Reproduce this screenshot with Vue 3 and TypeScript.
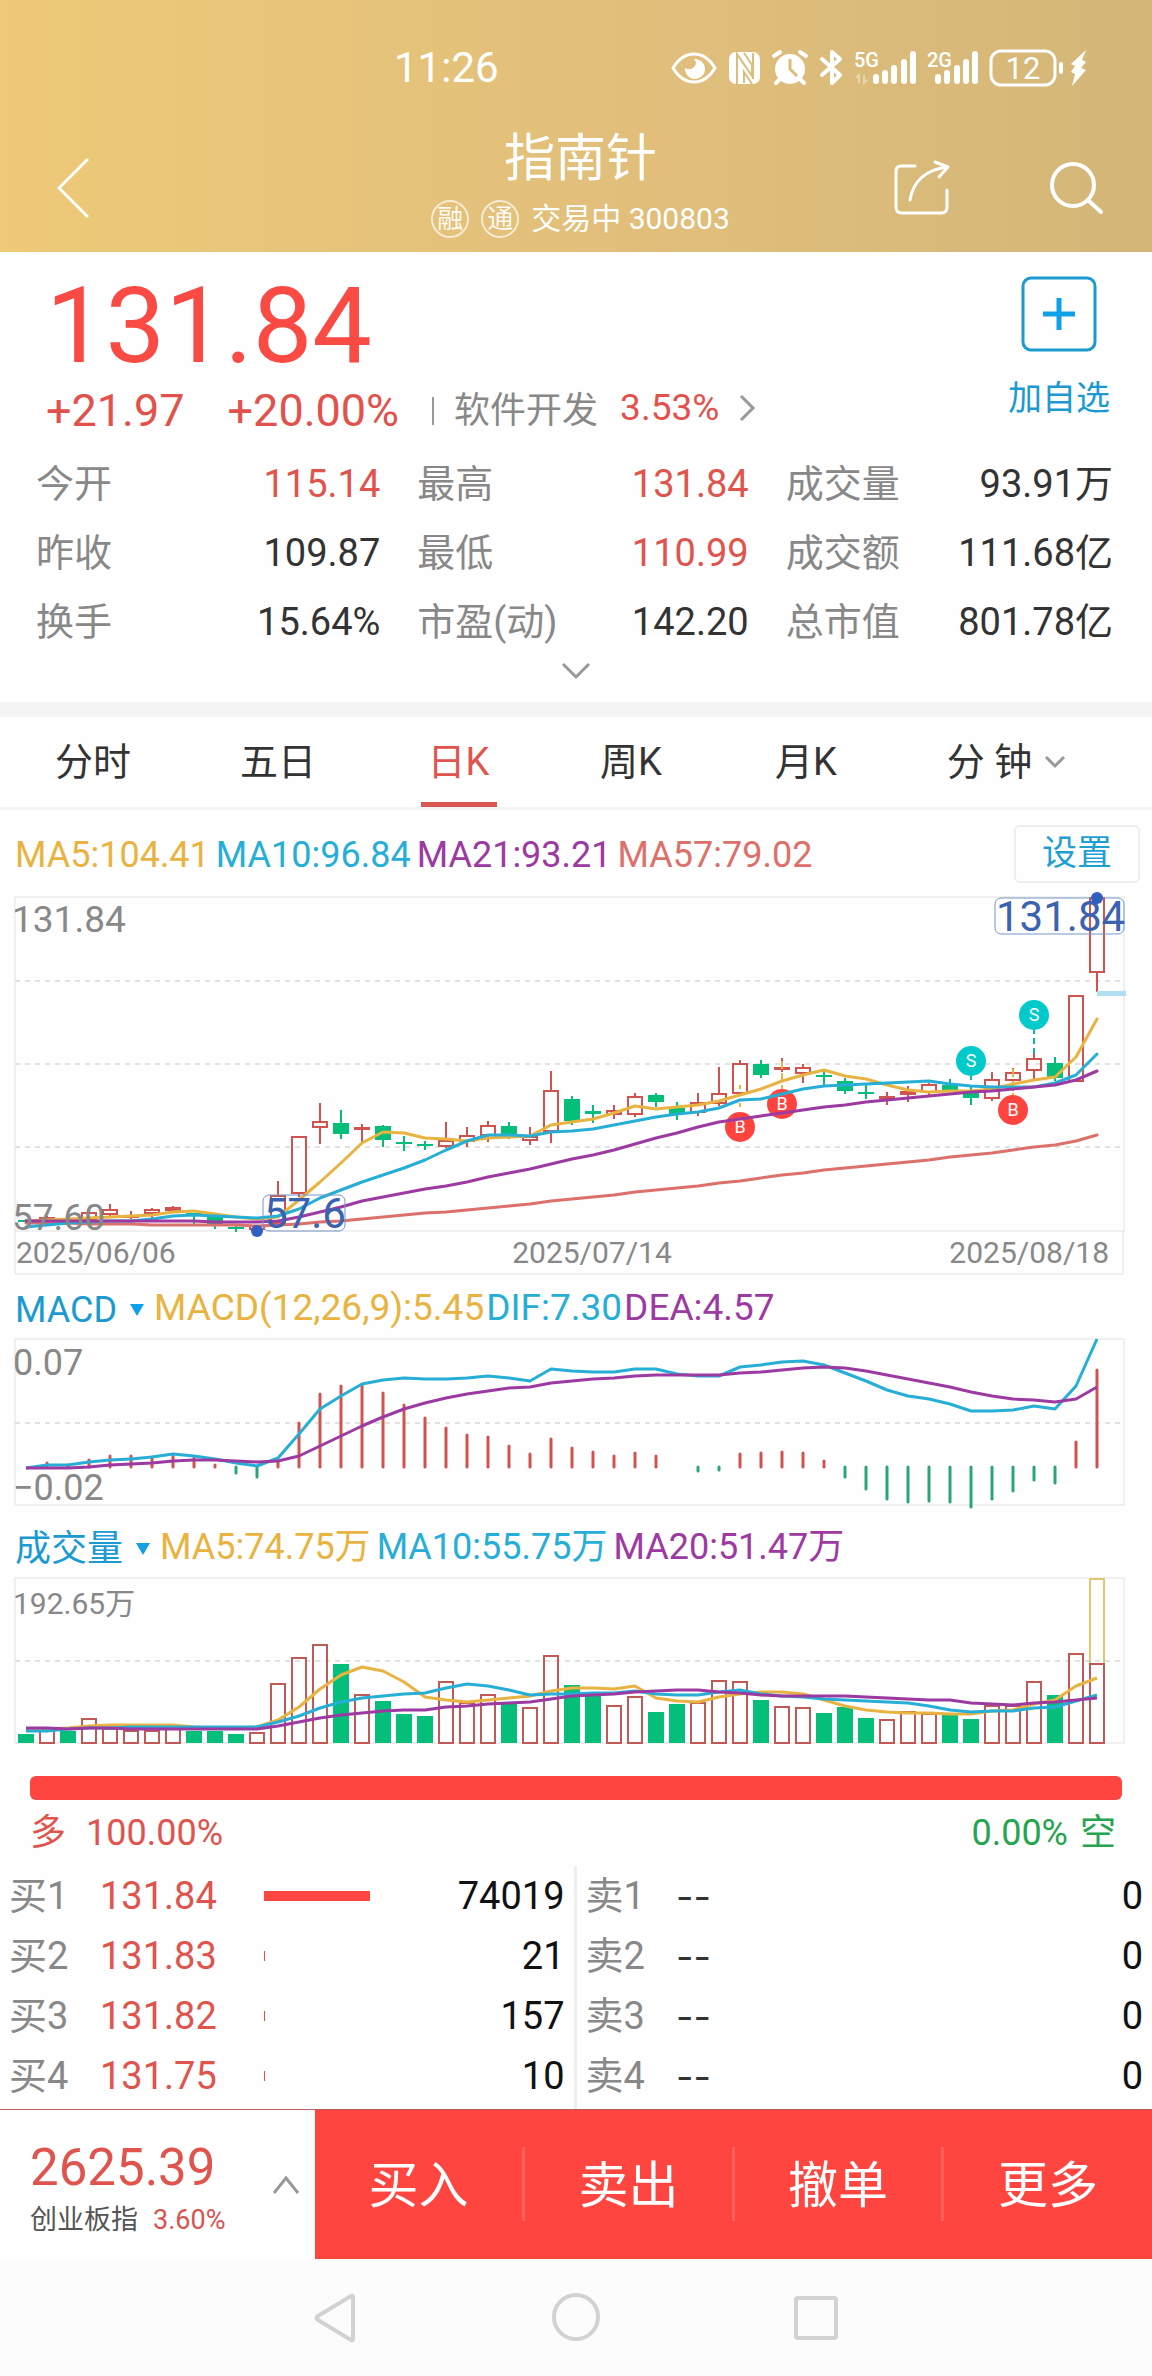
<script setup lang="ts">
type Tone = 'up' | 'down' | 'plain'
interface Stat { label: string; value: string; tone: Tone }
interface Legend { text: string; color: string }
/** [rising, body top, body bottom, wick top, wick bottom] */
type Candle = [number, number, number, number, number]

const YELLOW = '#e8b341'
const BLUE = '#27aed6'
const PURPLE = '#9c3aa2'
const SALMON = '#dc706b'
const RED = '#d0534f'
const GREEN = '#05be7a'

const stats: Stat[] = [
  { label: '今开', value: '115.14', tone: 'up' },
  { label: '最高', value: '131.84', tone: 'up' },
  { label: '成交量', value: '93.91万', tone: 'plain' },
  { label: '昨收', value: '109.87', tone: 'plain' },
  { label: '最低', value: '110.99', tone: 'up' },
  { label: '成交额', value: '111.68亿', tone: 'plain' },
  { label: '换手', value: '15.64%', tone: 'plain' },
  { label: '市盈(动)', value: '142.20', tone: 'plain' },
  { label: '总市值', value: '801.78亿', tone: 'plain' },
]

const tabs = ['分时', '五日', '日K', '周K', '月K', '分 钟']
const activeTab = '日K'

const maLegend: Legend[] = [
  { text: 'MA5:104.41', color: YELLOW },
  { text: 'MA10:96.84', color: BLUE },
  { text: 'MA21:93.21', color: PURPLE },
  { text: 'MA57:79.02', color: SALMON },
]
const macdLegend: Legend[] = [
  { text: 'MACD(12,26,9):5.45', color: YELLOW },
  { text: 'DIF:7.30', color: BLUE },
  { text: 'DEA:4.57', color: PURPLE },
]
const volLegend: Legend[] = [
  { text: 'MA5:74.75万', color: YELLOW },
  { text: 'MA10:55.75万', color: BLUE },
  { text: 'MA20:51.47万', color: PURPLE },
]

const px = (i: number): number => 26 + 21 * i
const line = (ys: number[]): string => ys.map((y, i) => `${px(i)},${y}`).join(' ')

const candles: Candle[] = [
  [0, 340, 342, 339, 344], [1, 338, 340, 336, 342], [0, 338, 340, 337, 342], [1, 333, 339, 331, 341],
  [1, 330, 334, 324, 336], [1, 336, 337, 331, 339], [1, 330, 333, 328, 338], [1, 328, 330, 326, 332],
  [0, 333, 336, 333, 345], [0, 337, 344, 335, 349], [0, 347, 349, 345, 352], [1, 346, 349, 345, 351],
  [1, 316, 343, 301, 343], [1, 257, 313, 257, 317], [1, 242, 247, 223, 264], [0, 243, 254, 230, 259],
  [1, 248, 249, 244, 262], [0, 246, 260, 245, 267], [0, 262, 264, 256, 271], [0, 264, 266, 261, 270],
  [1, 261, 266, 242, 268], [1, 256, 261, 247, 267], [1, 246, 255, 241, 262], [0, 246, 255, 242, 259],
  [1, 257, 260, 247, 265], [1, 211, 251, 191, 263], [0, 219, 241, 216, 245], [0, 231, 234, 225, 243],
  [1, 231, 234, 225, 239], [1, 217, 234, 213, 237], [0, 215, 222, 213, 227], [0, 228, 234, 222, 240],
  [1, 223, 232, 213, 236], [1, 214, 223, 187, 226], [1, 184, 213, 180, 214], [0, 184, 195, 180, 198],
  [1, 188, 189, 178, 192], [1, 188, 193, 184, 203], [0, 195, 197, 190, 205], [0, 201, 211, 198, 214],
  [0, 212, 214, 205, 219], [1, 217, 218, 212, 225], [1, 212, 214, 206, 222], [1, 205, 212, 203, 217],
  [0, 205, 211, 199, 211], [0, 212, 218, 205, 225], [1, 200, 218, 192, 221], [1, 193, 200, 188, 211],
  [1, 179, 190, 174, 199], [0, 183, 198, 177, 201], [1, 116, 201, 116, 201], [1, 18, 92, 18, 112],
]
const ma5 = [341, 340, 339, 338, 337, 336, 335, 332, 331, 334, 337, 339, 337, 320, 302, 283, 263, 252, 253, 258, 259, 261, 258, 257, 256, 245, 242, 239, 233, 226, 229, 227, 225, 221, 215, 209, 201, 195, 190, 196, 199, 205, 210, 212, 211, 211, 209, 204, 200, 197, 177, 139]
const ma10 = [347, 345, 343, 342, 341, 341, 339, 336, 335, 336, 337, 338, 336, 329, 318, 310, 302, 295, 288, 280, 270, 261, 255, 255, 256, 252, 251, 249, 245, 241, 237, 234, 232, 228, 220, 219, 214, 209, 206, 205, 204, 203, 202, 201, 204, 206, 207, 207, 207, 203, 195, 174]
const ma21 = [341, 341, 341, 341, 341, 341, 341, 341, 341, 342, 342, 342, 341, 337, 332, 327, 321, 317, 313, 309, 306, 302, 297, 293, 289, 284, 279, 275, 270, 264, 258, 253, 247, 242, 239, 236, 233, 230, 227, 225, 222, 220, 218, 216, 214, 212, 211, 209, 207, 205, 200, 191]
const ma57 = [343, 343, 343, 344, 344, 344, 345, 345, 345, 345, 345, 346, 345, 344, 342, 341, 339, 337, 335, 333, 332, 330, 328, 326, 324, 321, 319, 317, 315, 312, 310, 308, 306, 303, 301, 298, 295, 293, 290, 288, 286, 284, 282, 280, 277, 275, 273, 270, 267, 265, 261, 255]
const priceLines = [
  { ys: ma57, color: SALMON },
  { ys: ma5, color: YELLOW },
  { ys: ma10, color: BLUE },
  { ys: ma21, color: PURPLE },
]
const marks = [
  { i: 34, y: 247, side: 'B' },
  { i: 36, y: 224, side: 'B' },
  { i: 47, y: 230, side: 'B' },
  { i: 45, y: 181, side: 'S' },
  { i: 48, y: 135, side: 'S' },
]

/** End of each histogram bar; the zero axis sits at 187. */
const hist = [187, 183, 185, 180, 176, 176, 177, 176, 178, 185, 193, 197, 181, 143, 114, 106, 105, 113, 125, 138, 148, 155, 157, 166, 174, 159, 168, 172, 176, 173, 176, 187, 191, 190, 174, 173, 172, 173, 181, 197, 209, 219, 222, 221, 222, 227, 219, 211, 200, 203, 162, 90]
const dif = [188, 185, 185, 182, 180, 179, 177, 174, 176, 179, 183, 186, 178, 154, 129, 116, 104, 100, 98, 99, 99, 98, 96, 98, 101, 89, 91, 92, 92, 89, 89, 94, 96, 96, 87, 85, 82, 81, 85, 93, 101, 110, 116, 119, 124, 131, 131, 130, 126, 129, 106, 59]
const dea = [188, 188, 188, 187, 185, 184, 183, 181, 180, 180, 181, 182, 181, 176, 166, 156, 146, 137, 129, 123, 118, 114, 111, 108, 107, 103, 101, 99, 98, 96, 95, 95, 95, 95, 93, 92, 90, 88, 87, 88, 91, 95, 99, 103, 107, 112, 116, 119, 120, 122, 119, 107]

const volTop = [214, 211, 211, 199, 209, 211, 211, 209, 211, 211, 214, 213, 164, 138, 125, 144, 175, 181, 194, 196, 162, 183, 175, 184, 188, 136, 165, 174, 186, 177, 192, 184, 183, 161, 162, 180, 187, 188, 193, 187, 198, 200, 192, 194, 195, 199, 186, 186, 162, 175, 134, 144]
const volFalling = new Set([0, 2, 8, 9, 10, 15, 17, 18, 19, 23, 26, 27, 30, 31, 35, 38, 39, 40, 44, 45, 49])
const vol5 = [210, 209, 208, 206, 205, 205, 205, 205, 207, 208, 208, 207, 200, 187, 169, 155, 147, 151, 162, 177, 180, 182, 180, 178, 176, 171, 168, 168, 169, 166, 178, 181, 182, 177, 174, 172, 172, 174, 180, 186, 190, 192, 193, 193, 194, 194, 191, 190, 184, 180, 166, 158]
const vol10 = [211, 211, 209, 208, 208, 207, 207, 207, 207, 207, 207, 207, 202, 196, 188, 182, 178, 176, 174, 173, 168, 164, 166, 170, 175, 174, 174, 173, 173, 171, 174, 175, 175, 172, 170, 174, 176, 177, 179, 180, 181, 182, 183, 186, 190, 192, 191, 191, 188, 187, 181, 175]
const vol20 = [208, 208, 209, 208, 208, 209, 209, 209, 209, 209, 209, 209, 206, 202, 198, 195, 193, 191, 190, 190, 187, 186, 184, 183, 182, 179, 176, 175, 174, 172, 171, 170, 170, 172, 173, 175, 176, 176, 176, 176, 177, 178, 179, 180, 180, 183, 184, 185, 183, 182, 180, 178]

const book = [
  { n: 1, bid: '131.84', bar: 106, lots: '74019' },
  { n: 2, bid: '131.83', bar: 1, lots: '21' },
  { n: 3, bid: '131.82', bar: 1, lots: '157' },
  { n: 4, bid: '131.75', bar: 1, lots: '10' },
]
const actions = ['买入', '卖出', '撤单', '更多']
</script>

<template>
  <div class="app">
    <header class="top">
      <div class="status">
        <span class="clock">11:26</span>
        <svg class="status-icons" width="420" height="40" viewBox="0 0 420 40" fill="none" stroke="#fff">
          <path d="M3 20C9 10 16 6 24 6S39 10 45 20C39 30 32 34 24 34S9 30 3 20Z" stroke-width="3" />
          <path d="M24 11a10 10 0 1 1-9 9q5 3 9-1t0-8z" fill="#fff" stroke="none" />
          <rect x="59" y="4" width="31" height="32" rx="7" fill="#fff" stroke="none" />
          <path d="M67 36V6l15 22V17L74 5M74 35V24l8 12M83 5v26" stroke="#dcbd7a" stroke-width="2" />
          <circle cx="120" cy="21" r="15" fill="#fff" stroke="none" />
          <path d="M120 11v10l7 7" stroke="#dcbd7a" stroke-width="3" />
          <path d="M104 8l6-4M136 8l-6-4M109 32l-3 3M131 32l3 3" stroke-width="4" stroke-linecap="round" />
          <path d="M152 11l18 16-8 8V4l8 7-18 16" stroke-width="4" stroke-linejoin="round" stroke-linecap="round" />
          <path d="M189 35v-8l-3 3M194 27v8l3-3" stroke-width="2" opacity=".4" />
          <g stroke-width="6" stroke-linecap="round">
            <path d="M206 29v4M215 25v8M224 20v13M234 14v19M243 6v27" />
            <path d="M268 29v4M277 25v8M287 20v13M296 14v19M305 6v27" />
          </g>
          <g fill="#fff" stroke="none" font-size="20" font-weight="500">
            <text x="184" y="19">5G</text>
            <text x="257" y="19">2G</text>
          </g>
          <rect x="321" y="3" width="64" height="34" rx="10" stroke-width="3" />
          <text x="353" y="31" text-anchor="middle" font-size="31" fill="#fff" stroke="none">12</text>
          <path d="M391 16v8" stroke-width="4" stroke-linecap="round" />
          <path d="M416 2l-15 14 4 2-4 6 4 2-3 12 14-16-5-2 5-6-4-2z" fill="#fff" stroke="none" />
        </svg>
      </div>
      <div class="titlebar">
        <div class="side left">
          <button class="icon-btn" aria-label="返回">
            <svg width="32" height="60" viewBox="0 0 32 60" fill="none" stroke="#fff" stroke-width="3"><path d="M31 1L2 30l29 29" /></svg>
          </button>
        </div>
        <div class="heading">
          <h1>指南针</h1>
          <p><span class="tag">融</span><span class="tag">通</span>交易中 300803</p>
        </div>
        <div class="side right">
          <button class="icon-btn" aria-label="分享">
            <svg width="58" height="56" viewBox="0 0 58 56" fill="none" stroke="#fff" stroke-width="3" stroke-linecap="round" stroke-linejoin="round">
              <path d="M22 6H8q-5 0-5 5v36q0 6 6 6h39q6 0 6-6V30" /><path d="M17 40C20 22 32 10 54 7M42 2l13 5-9 10" />
            </svg>
          </button>
          <button class="icon-btn" aria-label="搜索">
            <svg width="56" height="56" viewBox="0 0 56 56" fill="none" stroke="#fff" stroke-width="4" stroke-linecap="round">
              <circle cx="25" cy="25" r="21" /><path d="M41 41l12 11" />
            </svg>
          </button>
        </div>
      </div>
    </header>

    <section class="quote">
      <div class="quote-top">
        <div>
          <div class="price">131.84</div>
          <div class="change">
            <span>+21.97</span><span class="pct">+20.00%</span>
            <i class="sep"></i>
            <a href="#sector" class="sector">软件开发<b>3.53%</b>
              <svg width="18" height="28" viewBox="0 0 18 28" fill="none" stroke="#999" stroke-width="3"><path d="M2 2l12 12L2 26" /></svg>
            </a>
          </div>
        </div>
        <button class="add">
          <svg width="76" height="76" viewBox="0 0 76 76" fill="none" stroke="#1b9ad2">
            <rect x="2" y="2" width="72" height="72" rx="8" stroke-width="3" /><path d="M38 22v32M22 38h32" stroke="#10a0ea" stroke-width="5" />
          </svg>
          <span>加自选</span>
        </button>
      </div>
      <dl class="stats">
        <div v-for="s in stats" :key="s.label"><dt>{{ s.label }}</dt><dd :class="s.tone">{{ s.value }}</dd></div>
      </dl>
      <button class="expand" aria-label="展开">
        <svg width="30" height="18" viewBox="0 0 30 18" fill="none" stroke="#999" stroke-width="3"><path d="M2 2l13 13L28 2" /></svg>
      </button>
    </section>

    <nav class="tabs">
      <button v-for="t in tabs" :key="t" :class="{ active: t === activeTab }">
        <span>{{ t }}</span>
        <svg v-if="t === '分 钟'" width="22" height="14" viewBox="0 0 22 14" fill="none" stroke="#999" stroke-width="3"><path d="M2 2l9 9 9-9" /></svg>
      </button>
    </nav>

    <div class="ma-row">
      <div class="legend"><span v-for="l in maLegend" :key="l.text" :style="{ color: l.color }">{{ l.text }}</span></div>
      <button class="settings">设置</button>
    </div>

    <svg class="chart" viewBox="0 5 1152 391">
      <g fill="none" stroke="#e2e2e2" stroke-width="1">
        <rect x="15" y="17" width="1109" height="334" /><path d="M15 351v43H1123V351" />
        <path d="M15 101h1109M15 184h1109M15 267h1109" stroke-width="2" stroke-dasharray="5 5" />
      </g>
      <g v-for="(c, i) in candles" :key="i">
        <path :d="`M${px(i)} ${c[3]}V${c[1]}M${px(i)} ${c[2]}V${c[4]}`" :stroke="c[0] ? RED : GREEN" stroke-width="2" />
        <rect v-if="c[0]" :x="px(i) - 7" :y="c[1]" width="14" :height="c[2] - c[1]" fill="none" :stroke="RED" stroke-width="2" />
        <rect v-else :x="px(i) - 8" :y="c[1]" width="16" :height="c[2] - c[1]" :fill="GREEN" />
      </g>
      <path d="M740 205v28" :stroke="YELLOW" stroke-width="2" stroke-dasharray="4 14" />
      <path d="M782 181v28M1013 189v26" :stroke="YELLOW" stroke-width="2" stroke-dasharray="8 4" />
      <path d="M971 194v6M1034 148v26" stroke="#13b6a6" stroke-width="2" stroke-dasharray="6 4" />
      <g v-for="m in marks" :key="m.i">
        <circle :cx="px(m.i)" :cy="m.y" r="15" :fill="m.side === 'B' ? '#ff443f' : '#00caca'" />
        <text :x="px(m.i)" :y="m.y + 6" text-anchor="middle" font-size="18" fill="#fff">{{ m.side }}</text>
      </g>
      <polyline v-for="l in priceLines" :key="l.color" :points="line(l.ys)" fill="none" :stroke="l.color" stroke-width="3" stroke-linejoin="round" stroke-linecap="round" />
      <rect x="1097" y="111" width="29" height="5" fill="#b0dff2" />
      <g fill="#888" font-size="37">
        <text x="12" y="52">131.84</text><text x="12" y="350">57.60</text>
      </g>
      <g fill="none" stroke="#7595c4" stroke-width="1">
        <rect x="995" y="18" width="129" height="36" rx="6" /><rect x="263" y="315" width="82" height="36" rx="6" />
      </g>
      <g fill="#3a62b0" font-size="42">
        <text x="996" y="51">131.84</text><text x="264" y="348">57.6</text>
      </g>
      <circle cx="257" cy="351" r="6" fill="#2f5fc0" /><circle cx="1097" cy="18" r="6" fill="#2f5fc0" />
      <g fill="#888" font-size="30">
        <text x="16" y="383">2025/06/06</text><text x="592" y="383" text-anchor="middle">2025/07/14</text><text x="1109" y="383" text-anchor="end">2025/08/18</text>
      </g>
    </svg>

    <div class="ind-row">
      <button class="pick">MACD<i></i></button>
      <div class="legend macd"><span v-for="l in macdLegend" :key="l.text" :style="{ color: l.color }">{{ l.text }}</span></div>
    </div>
    <svg class="chart" viewBox="0 54 1152 178">
      <rect x="15" y="59" width="1109" height="166" fill="none" stroke="#e2e2e2" />
      <path d="M15 143h1109" stroke="#e2e2e2" stroke-width="2" stroke-dasharray="5 5" />
      <g fill="#888" font-size="36"><text x="13" y="95">0.07</text><text x="13" y="220">−0.02</text></g>
      <template v-for="(y, i) in hist" :key="i">
        <path v-if="y !== 187" :d="`M${px(i)} 187V${y}`" :stroke="y > 187 ? '#2aa577' : RED" stroke-width="3" stroke-linecap="round" />
      </template>
      <polyline :points="line(dif)" fill="none" :stroke="BLUE" stroke-width="3" stroke-linejoin="round" />
      <polyline :points="line(dea)" fill="none" :stroke="PURPLE" stroke-width="3" stroke-linejoin="round" />
    </svg>

    <div class="ind-row tall">
      <button class="pick">成交量<i></i></button>
      <div class="legend"><span v-for="l in volLegend" :key="l.text" :style="{ color: l.color }">{{ l.text }}</span></div>
    </div>
    <svg class="chart" viewBox="0 54 1152 178">
      <rect x="15" y="58" width="1109" height="165" fill="none" stroke="#e2e2e2" />
      <path d="M15 141h1109" stroke="#e2e2e2" stroke-width="2" stroke-dasharray="5 5" />
      <text x="13" y="94" fill="#888" font-size="30">192.65万</text>
      <rect x="1090" y="59" width="14" height="164" fill="none" stroke="#e0c872" stroke-width="2" />
      <template v-for="(y, i) in volTop" :key="i">
        <rect v-if="volFalling.has(i)" :x="px(i) - 8" :y="y" width="16" :height="223 - y" :fill="GREEN" />
        <rect v-else :x="px(i) - 7" :y="y" width="14" :height="223 - y" fill="none" stroke="#c05a56" stroke-width="2" />
      </template>
      <polyline :points="line(vol5)" fill="none" :stroke="YELLOW" stroke-width="3" stroke-linejoin="round" />
      <polyline :points="line(vol10)" fill="none" :stroke="BLUE" stroke-width="3" stroke-linejoin="round" />
      <polyline :points="line(vol20)" fill="none" :stroke="PURPLE" stroke-width="3" stroke-linejoin="round" />
    </svg>

    <section class="force">
      <div class="force-bar"></div>
      <div class="force-text">
        <span class="long"><span>多</span><span>100.00%</span></span>
        <span class="short"><span>0.00%</span><span>空</span></span>
      </div>
    </section>

    <table class="book">
      <tbody>
        <tr v-for="r in book" :key="r.n">
          <th scope="row" class="bid">买{{ r.n }}</th>
          <td class="bid-price">{{ r.bid }}</td>
          <td class="depth"><i :style="{ width: r.bar + 'px' }"></i></td>
          <td class="lots">{{ r.lots }}</td>
          <th scope="row" class="ask">卖{{ r.n }}</th>
          <td class="ask-price">--</td>
          <td class="ask-lots">0</td>
        </tr>
      </tbody>
    </table>

    <footer class="trade">
      <button class="index">
        <span class="index-text"><strong>2625.39</strong><span>创业板指<em>3.60%</em></span></span>
        <svg width="28" height="20" viewBox="0 0 28 20" fill="none" stroke="#999" stroke-width="3"><path d="M2 18L14 3l12 15" /></svg>
      </button>
      <button v-for="a in actions" :key="a" class="act">{{ a }}</button>
    </footer>

    <nav class="sysnav">
      <button aria-label="后退"><svg width="50" height="52" viewBox="0 0 50 52"><path d="M42 5v42q0 2-2 1L7 28q-3-2 0-4L40 4q2-1 2 1z" /></svg></button>
      <button aria-label="主屏"><svg width="50" height="52" viewBox="0 0 50 52"><circle cx="25" cy="25" r="22" /></svg></button>
      <button aria-label="最近任务"><svg width="50" height="52" viewBox="0 0 50 52"><rect x="5" y="6" width="40" height="40" rx="2" /></svg></button>
    </nav>
  </div>
</template>

<style>
body { margin: 0; background: #fefefe; }
</style>

<style scoped>
.app { font-family: Roboto, "Noto Sans CJK SC", sans-serif; font-size: 38px; color: #333; background: #fefefe; }
button { font: inherit; color: inherit; background: none; border: 0; padding: 0; margin: 0; }
svg { display: block; }
a { color: inherit; text-decoration: none; }
i, em { font-style: normal; }

.top { background: linear-gradient(90deg, #edc978 0%, #e0be7b 60%, #d3b678 100%); color: #fff; }
.status { display: flex; align-items: center; justify-content: space-between; height: 102px; padding: 34px 62px 0 394px; box-sizing: border-box; }
.clock { font-size: 42px; line-height: 48px; }
.titlebar { display: flex; padding: 25px 0 13px; }
.side { flex: 1; display: flex; align-items: center; box-sizing: border-box; padding-top: 9px; }
.left { padding-left: 57px; }
.right { justify-content: flex-end; gap: 97px; padding-right: 48px; }
.heading { text-align: center; }
h1 { margin: 2px 0 10px; font-size: 51px; line-height: 60px; font-weight: 400; }
.heading p { margin: 0; display: flex; align-items: center; justify-content: center; font-size: 30px; line-height: 40px; }
.tag { width: 38px; height: 38px; box-sizing: border-box; margin-right: 12px; border: 2px solid rgba(255, 255, 255, .75); border-radius: 50%; font-size: 26px; line-height: 34px; text-align: center; opacity: .9; }

.quote { padding-top: 20px; }
.quote-top { display: flex; justify-content: space-between; padding: 0 42px 0 46px; }
.price { font-size: 106px; line-height: 108px; color: #fa4a44; }
.change { display: flex; align-items: center; margin-top: 8px; height: 46px; font-size: 45px; line-height: 46px; color: #e2524c; }
.pct { margin-left: 43px; }
.sep { width: 2px; height: 28px; margin: 0 20px 0 33px; background: #999; }
.sector { display: flex; align-items: center; font-size: 36px; color: #888; }
.sector b { font-weight: 400; margin: 0 20px 6px 22px; font-size: 37px; line-height: 40px; color: #e2524c; }
.sector svg { margin-bottom: 6px; }
.add { display: flex; flex-direction: column; align-items: center; padding-top: 4px; color: #1b9ad2; font-size: 34px; line-height: 40px; gap: 26px; }
.stats { display: grid; grid-template-columns: 344fr 331fr 327fr; column-gap: 37px; margin: 16px 39px 0 36px; }
.stats div { display: flex; justify-content: space-between; line-height: 69px; }
dt { color: #888; }
dd { margin: 0; }
.up { color: #e0544e; }
.expand { display: block; width: 100%; height: 45px; padding-bottom: 18px; }
.expand svg { margin: 0 auto; }

.tabs { display: grid; grid-template-columns: 186fr 184fr 177fr 168fr 182fr 219fr; padding-right: 36px; height: 90px; border-top: 15px solid #f4f4f4; border-bottom: 3px solid #f4f4f4; }
.tabs button { display: flex; align-items: center; justify-content: center; gap: 12px; line-height: 91px; }
.tabs span { min-width: 76px; box-sizing: border-box; height: 90px; text-align: center; }
.tabs .active span { color: #e0544e; border-bottom: 5px solid #d95753; }

.ma-row { display: flex; align-items: center; justify-content: space-between; height: 75px; padding: 0 12px 0 15px; box-sizing: border-box; }
.legend { display: flex; gap: 6px; font-size: 36px; line-height: 44px; white-space: nowrap; }
.legend.macd { gap: 2px; font-size: 37px; }
.settings { width: 126px; height: 58px; margin-top: 12px; border: 2px solid #eee; border-radius: 6px; color: #1f9fd2; font-size: 35px; line-height: 54px; }
.ma-row .legend { margin-top: 14px; }
.chart { width: 100%; height: auto; }
.ind-row { display: flex; align-items: center; height: 58px; padding: 6px 15px 0; box-sizing: border-box; }
.ind-row.tall { height: 62px; padding-top: 8px; }
.pick { display: flex; align-items: center; font-size: 36px; line-height: 44px; color: #1b9ad2; padding-top: 4px; margin-right: 10px; }
.pick i { border: 7px solid transparent; border-top: 12px solid #10a0ea; border-bottom: 0; margin-left: 13px; }

.force { padding: 24px 30px 0; }
.force-bar { height: 24px; border-radius: 6px; background: #ff4540; }
.force-text { display: flex; justify-content: space-between; padding: 0 6px 0 0; font-size: 36px; line-height: 66px; }
.force-text > span { display: flex; }
.long { gap: 20px; color: #e0544e; }
.short { gap: 12px; color: #27a450; }

.book { width: 100%; border-collapse: collapse; table-layout: fixed; line-height: 60px; color: #111; }
.book th, .book td { padding: 0; font-weight: 400; text-align: left; height: 60px; }
.book tr:last-child > * { padding-bottom: 3px; }
.book th { color: #888; }
.bid { width: 100px; box-sizing: border-box; }
.book .bid { padding-left: 9px; }
.book .bid-price { width: 164px; color: #e0544e; }
.depth { width: 114px; }
.depth i { display: block; height: 10px; background: #ff4540; }
.book .lots { width: 197px; text-align: right; padding-right: 9px; border-right: 3px solid #eee; box-sizing: border-box; }
.ask { width: 101px; box-sizing: border-box; }
.book .ask { padding-left: 9px; }
.book .ask-price { font-family: Inter, Roboto, sans-serif; color: #333; }
.book .ask-lots { text-align: right; padding-right: 9px; }

.trade { display: grid; grid-template-columns: 315fr 210fr 210fr 209fr 208fr; height: 150px; box-sizing: border-box; border-top: 1px solid #b5625e; background: #ff4540; color: #fff; }
.index { display: flex; align-items: center; justify-content: space-between; padding: 0 15px 0 30px; background: #fff; text-align: left; }
.index-text { display: flex; flex-direction: column; padding-top: 11px; }
.index strong { font-weight: 400; font-size: 51px; line-height: 60px; color: #e0544e; }
.index-text span { font-size: 27px; line-height: 44px; color: #555; }
.index em { margin-left: 15px; color: #d9534e; }
.act { font-size: 50px; line-height: 60px; padding-top: 2px; }
.act:not(:last-child) { border-right: 3px solid; border-image: linear-gradient(transparent 25%, #ff625d 25%, #ff625d 74%, transparent 74%) 1; }
.sysnav { display: flex; justify-content: center; align-items: center; gap: 190px; height: 117px; background: #fcfcfc; }
.sysnav svg { fill: none; stroke: #d2d2d2; stroke-width: 4; }
</style>
